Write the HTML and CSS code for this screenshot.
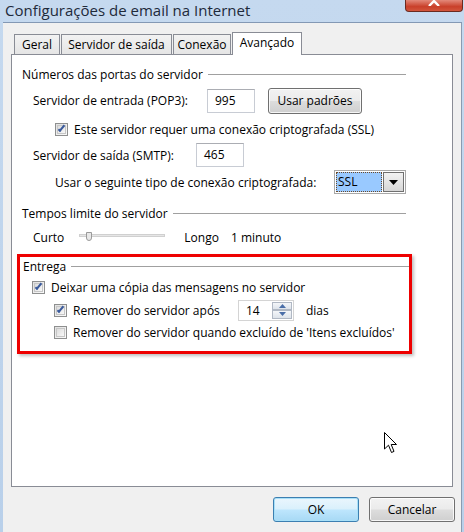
FILE: index.html
```html
<!DOCTYPE html>
<html lang="pt">
<head>
  <meta charset="UTF-8">
  <title>Configurações de email na Internet</title>
  <link rel="stylesheet" href="styles.css">
</head>
<body>
  <div class="window">
    <div class="titlebar">
      <span class="title">Configurações de email na Internet</span>
      <span class="close-btn">
        <svg width="14" height="6" viewBox="0 0 14 6"><path d="M2 6 L7 1 L12 6" stroke="#fff" stroke-width="2.4" fill="none"/></svg>
      </span>
    </div>

    <div class="client">
      <div class="tabs">
        <div class="tab tab-geral">Geral</div>
        <div class="tab tab-saida">Servidor de saída</div>
        <div class="tab tab-conexao">Conexão</div>
        <div class="tab active">Avançado</div>
      </div>

      <div class="panel">
        <!-- portas -->
        <div class="group-title"><span>Números das portas do servidor</span><i></i></div>
        <div class="row row-pop">
          <span class="label">Servidor de entrada (POP3):</span>
          <div class="textbox tb-pop">995</div>
          <button class="btn btn-defaults">Usar padrões</button>
        </div>
        <label class="check row-ssl">
          <span class="box checked"></span>Este servidor requer uma conexão criptografada (SSL)
        </label>
        <div class="row row-smtp">
          <span class="label">Servidor de saída (SMTP):</span>
          <div class="textbox tb-smtp">465</div>
        </div>
        <div class="row row-crypt">
          <span class="label">Usar o seguinte tipo de conexão criptografada:</span>
          <div class="combo">
            <span class="combo-value">SSL</span>
            <span class="combo-arrow"><svg width="9" height="5" viewBox="0 0 9 5"><path d="M0 0 H9 L4.5 5 Z" fill="#000"/></svg></span>
          </div>
        </div>

        <!-- tempos -->
        <div class="group-title gt-tempos"><span>Tempos limite do servidor</span><i></i></div>
        <div class="row row-timeout">
          <span class="label">Curto</span>
          <div class="slider"><span class="thumb"></span></div>
          <span class="label">Longo</span>
          <span class="label">1 minuto</span>
        </div>

        <!-- entrega -->
        <div class="highlight">
          <div class="group-title gt-entrega"><span>Entrega</span><i></i></div>
          <label class="check row-leave">
            <span class="box checked"></span>Deixar uma cópia das mensagens no servidor
          </label>
          <div class="row row-remove">
            <label class="check">
              <span class="box checked"></span>Remover do servidor após
            </label>
            <div class="spinner">
              <span class="spin-value">14</span>
              <span class="spin-btns">
                <span class="spin-up"><svg width="7" height="4" viewBox="0 0 7 4"><path d="M0 4 L3.5 0 L7 4 Z" fill="#4a6ea8"/></svg></span>
                <span class="spin-down"><svg width="7" height="4" viewBox="0 0 7 4"><path d="M0 0 L3.5 4 L7 0 Z" fill="#4a6ea8"/></svg></span>
              </span>
            </div>
            <span class="label">dias</span>
          </div>
          <label class="check row-deleted">
            <span class="box"></span>Remover do servidor quando excluído de 'Itens excluídos'
          </label>
        </div>

        <svg class="cursor" width="14" height="23" viewBox="0 0 14 23">
          <path d="M0.5 0.5 V17 L4.5 13.2 L7.5 20.5 L10 19.4 L7.2 12.5 H12.5 Z" fill="#fff" stroke="#000" stroke-width="1"/>
        </svg>
      </div>

      <div class="footer">
        <button class="btn btn-ok">OK</button>
        <button class="btn btn-cancel">Cancelar</button>
      </div>
    </div>
  </div>
</body>
</html>
```

FILE: styles.css
```css
*, *::before, *::after {
  box-sizing: border-box;
}
body {
  margin: 0;
  padding: 0;
  font-family: 'Open Sans', 'Noto Sans', sans-serif;
  font-size: 12px;
  color: #000;
  background: #bfd5ec;
}
.window {
  width: 464px;
  height: 532px;
  display: flex;
  flex-direction: column;
  background: linear-gradient(to bottom, #c5d9ef, #b9d0ea);
  overflow: hidden;
}

/* barra de título */
.titlebar {
  height: 22px;
  display: flex;
  justify-content: space-between;
  align-items: flex-start;
  flex-shrink: 0;
}
.title {
  font-size: 15px;
  line-height: 20px;
  margin: 0 0 0 5px;
  color: #1e2a3a;
}
.close-btn {
  width: 58px;
  height: 12px;
  margin-right: 1px;
  border: 1px solid #6b2a20;
  border-top: none;
  border-radius: 0 0 4px 4px;
  background: linear-gradient(to bottom, #e3897a, #c9402a 60%, #d2553c);
  display: flex;
  justify-content: center;
  align-items: flex-start;
}

/* área cliente */
.client {
  flex: 1;
  margin: 0 2px 0 3px;
  background: #f0f0f0;
  border-top: 1px solid #8398b4;
  border-right: 1px solid #8a9bb0;
  display: flex;
  flex-direction: column;
}

/* abas */
.tabs {
  display: flex;
  align-items: flex-end;
  height: 31px;
  padding-left: 11px;
}
.tab {
  height: 20px;
  margin-right: 1px;
  border: 1px solid #898c95;
  border-bottom: none;
  background: linear-gradient(to bottom, #f2f2f2, #e5e5e5);
  line-height: 19px;
  font-size: 12px;
  text-align: center;
}
.tab-geral { width: 46px; }
.tab-saida { width: 111px; }
.tab-conexao { width: 58px; }
.tab.active {
  width: 70px;
  height: 23px;
  margin-bottom: -1px;
  background: #fff;
  position: relative;
  z-index: 1;
  line-height: 19px;
}

/* painel */
.panel {
  position: relative;
  margin: 0 8px;
  height: 433px;
  background: #fff;
  border: 1px solid #898c95;
  padding: 11px 0 0 10px;
}
.group-title {
  display: flex;
  align-items: center;
  gap: 5px;
  height: 16px;
  width: 384px;
}
.group-title i {
  flex: 1;
  height: 1px;
  background: #a0a0a0;
}
.row {
  display: flex;
  align-items: center;
  white-space: nowrap;
}
.row-pop {
  margin-top: 5px;
  padding-left: 11px;
  height: 27px;
}
.row-pop .label { width: 174px; }
.textbox {
  height: 24px;
  border: 1px solid #c8ccd4;
  border-top-color: #abadb3;
  background: #fff;
  padding: 3px 0 0 7px;
  line-height: 16px;
}
.tb-pop { width: 48px; }
.tb-smtp { width: 48px; }
.btn {
  font-family: inherit;
  font-size: 12px;
  color: #000;
  border: 1px solid #707070;
  border-radius: 3px;
  background: linear-gradient(to bottom, #f2f2f2 0%, #ebebeb 49%, #dddddd 51%, #cfcfcf 100%);
  box-shadow: inset 0 0 0 1px rgba(255,255,255,0.8);
}
.btn-defaults {
  width: 94px;
  height: 26px;
  margin-left: 13px;
  padding: 0;
}
.check {
  display: flex;
  align-items: center;
  white-space: nowrap;
}
.box {
  width: 13px;
  height: 13px;
  border: 1px solid #8e8f8f;
  background: linear-gradient(135deg, #e0e0e0, #fafafa);
  margin-right: 6px;
  position: relative;
  flex-shrink: 0;
}
.box::before {
  content: '';
  position: absolute;
  inset: 1px;
  border: 1px solid #c6c6c6;
  background: linear-gradient(135deg, #dcdcdc, #f8f8f8);
}
.box.checked::after {
  content: '';
  position: absolute;
  left: 4px;
  top: 0;
  width: 3px;
  height: 8px;
  border: solid #3a5a9c;
  border-width: 0 2px 2px 0;
  transform: rotate(40deg);
}
.row-ssl {
  margin-top: 7px;
  padding-left: 33px;
  height: 16px;
}
.row-smtp {
  margin-top: 5px;
  padding-left: 11px;
  height: 26px;
}
.row-smtp .label { width: 163px; }
.row-crypt {
  margin-top: 2px;
  padding-left: 33px;
  height: 24px;
}
.row-crypt .label { width: 279px; }
.combo {
  width: 72px;
  height: 24px;
  border: 1px solid #a8a8a8;
  display: flex;
  padding: 1px;
  background: #fff;
}
.combo-value {
  flex: 1;
  background: #99c9ff;
  border: 1px dotted #6b4a2a;
  padding-left: 1px;
  line-height: 18px;
}
.combo-arrow {
  width: 21px;
  border: 1px solid #707070;
  margin-left: 1px;
  background: linear-gradient(to bottom, #f2f2f2, #d6d6d6);
  display: flex;
  align-items: center;
  justify-content: center;
}
.gt-tempos {
  margin-top: 11px;
}
.row-timeout {
  margin-top: 8px;
  padding-left: 11px;
  height: 16px;
}
.slider {
  width: 86px;
  height: 3px;
  margin: 0 19px 0 15px;
  background: #e6e6e6;
  border: 1px solid #d0d0d0;
  position: relative;
  top: -2px;
}
.thumb {
  position: absolute;
  left: 6px;
  top: -3px;
  width: 6px;
  height: 9px;
  background: #e8e8e8;
  border: 1px solid #9a9a9a;
  border-radius: 0 0 3px 3px;
}
.row-timeout .label + .label { margin-left: 12px; }

/* destaque vermelho */
.highlight {
  margin: 9px 0 0 -5px;
  width: 395px;
  height: 100px;
  border: 3px solid #ee0000;
  padding: 1px 0 0 3px;
  box-shadow: 2px 2px 3px rgba(0,0,0,0.25);
}
.gt-entrega {
  width: 386px;
}
.row-leave {
  margin-top: 5px;
  padding-left: 9px;
  height: 16px;
}
.row-remove {
  margin-top: 4px;
  padding-left: 31px;
  height: 22px;
}
.row-remove .check { width: 184px; }
.spinner {
  width: 56px;
  height: 21px;
  border: 1px solid #d4d4d4;
  display: flex;
  background: #fff;
}
.spin-value {
  flex: 1;
  padding-left: 7px;
  line-height: 19px;
}
.spin-btns {
  width: 20px;
  display: flex;
  flex-direction: column;
  margin: 1px;
}
.spin-btns span {
  flex: 1;
  border: 1px solid #b0b8c4;
  background: linear-gradient(to bottom, #f4f6f9, #dde3ea);
  display: flex;
  align-items: center;
  justify-content: center;
}
.row-remove > .label { margin-left: 12px; }
.row-deleted {
  margin-top: 3px;
  padding-left: 31px;
  height: 16px;
}

.cursor {
  position: absolute;
  left: 372px;
  top: 377px;
}

/* rodapé */
.footer {
  display: flex;
  justify-content: flex-end;
  gap: 10px;
  padding: 10px 6px 0 0;
}
.btn-ok, .btn-cancel {
  width: 86px;
  height: 25px;
}
.btn-ok {
  border-color: #3c7fb1;
  box-shadow: inset 0 0 0 1px #a8e0f8;
  background: linear-gradient(to bottom, #eaf6fd 0%, #d9f0fc 49%, #bee6fd 51%, #a7d9f5 100%);
}
```
